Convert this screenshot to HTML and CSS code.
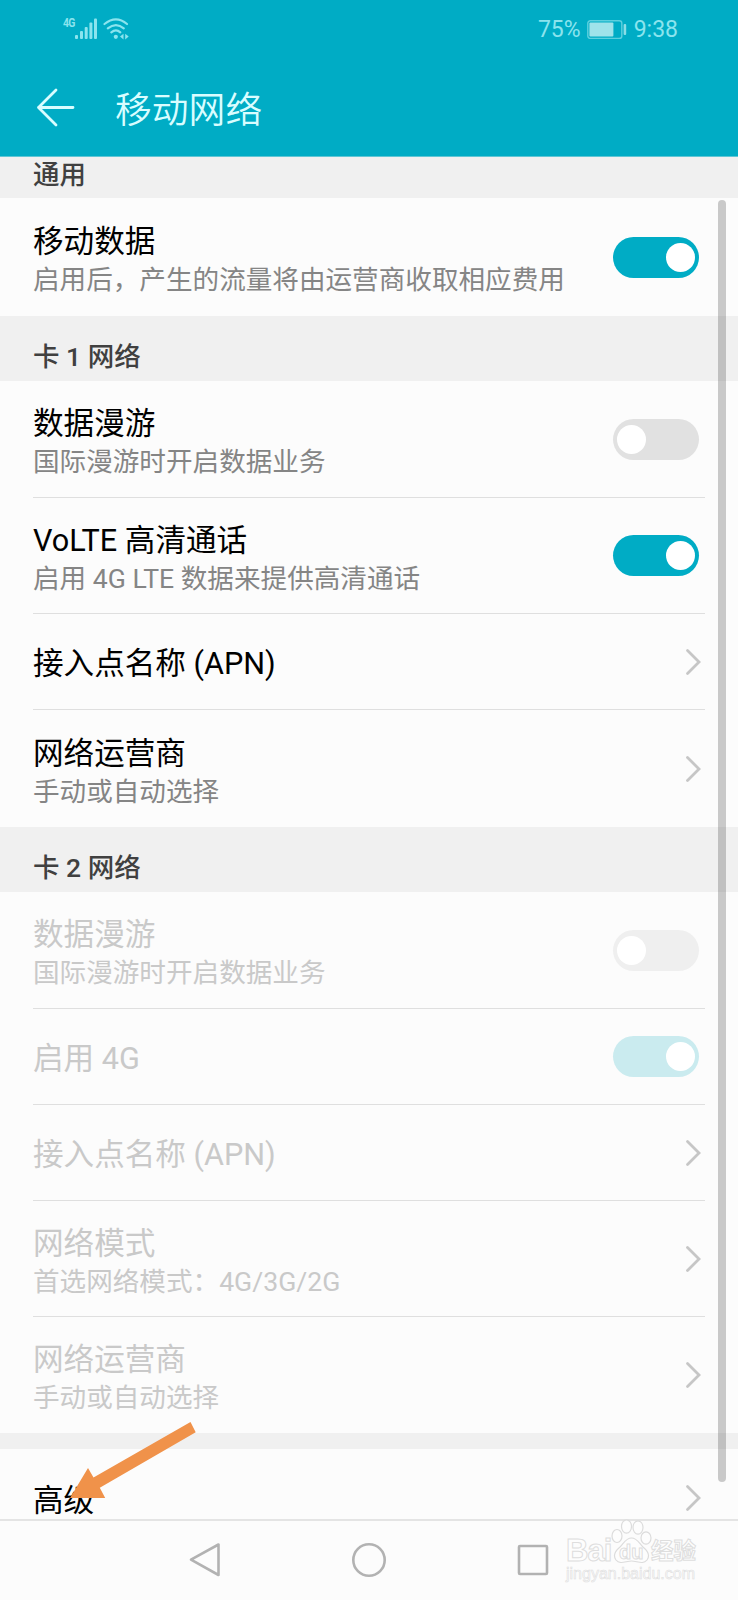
FILE: index.html
```
<!DOCTYPE html>
<html lang="zh-CN">
<head>
  <meta charset="UTF-8">
  <title>移动网络</title>
  <meta name="viewport" content="width=device-width, initial-scale=1.0">
  <link rel="stylesheet" href="styles.css">
</head>
<body>
  <svg class="defs" width="0" height="0">
    <symbol id="chevron" viewBox="0 0 16 28">
      <path d="M2.5 2.5 L14 14 L2.5 25.5" fill="none" stroke="#c6c6c6" stroke-width="2.8" stroke-linecap="round" stroke-linejoin="miter"/>
    </symbol>
  </svg>

  <header class="header">
    <div class="status-bar">
      <div class="status-left">
        <span class="net-type">4G</span>
        <svg class="signal" width="23" height="22" viewBox="0 0 23 22" fill="currentColor">
          <rect x="0" y="17" width="3" height="4" rx="1"/>
          <rect x="5" y="13" width="3" height="8" rx="1"/>
          <rect x="9.7" y="9" width="3" height="12" rx="1"/>
          <rect x="14.4" y="4.5" width="3" height="16.5" rx="1"/>
          <rect x="19" y="0.5" width="3" height="20.5" rx="1"/>
        </svg>
        <svg class="wifi" width="26" height="22" viewBox="0 0 26 22" fill="none" stroke="currentColor" stroke-width="2.2" stroke-linecap="round">
          <path d="M1.5 6 Q13 -3.2 24 6"/>
          <path d="M4.8 10.4 Q13 3.8 20.8 10.4"/>
          <path d="M8.3 14.3 Q13 10.6 17.3 14.3"/>
          <circle cx="12.8" cy="18.8" r="2.1" fill="currentColor" stroke="none"/>
          <path d="M20.5 15.7 V21.5 L17 18.6 Z M22.2 15.7 V21.5 L25.7 18.6 Z" fill="currentColor" stroke="none"/>
        </svg>
      </div>
      <div class="status-right">
        <span>75%</span>
        <svg class="battery" width="40" height="20" viewBox="0 0 40 20">
          <rect x="0.8" y="0.8" width="34" height="17.6" rx="2.5" fill="none" stroke="#5dd0de" stroke-width="1.4"/>
          <rect x="2.4" y="2.5" width="24" height="14" rx="1" fill="#9fe3ea"/>
          <rect x="36.6" y="4" width="2.6" height="11" rx="1" fill="#8bdde6"/>
        </svg>
        <span>9:38</span>
      </div>
    </div>
    <div class="title-bar">
      <svg width="40" height="40" viewBox="0 0 40 40" fill="none" stroke="#d9fdff" stroke-width="2.8" stroke-linecap="round" stroke-linejoin="round">
        <path d="M37 19.5 H2.5 M20 2 L2.5 19.5 L20 37"/>
      </svg>
      <h1>移动网络</h1>
    </div>
  </header>

  <main class="list">
    <h2 class="section first">通用</h2>
    <div class="row tall">
      <div class="text">
        <div class="name">移动数据</div>
        <div class="desc">启用后，产生的流量将由运营商收取相应费用</div>
      </div>
      <div class="toggle on"></div>
    </div>

    <h2 class="section">卡 1 网络</h2>
    <div class="row line">
      <div class="text">
        <div class="name">数据漫游</div>
        <div class="desc">国际漫游时开启数据业务</div>
      </div>
      <div class="toggle"></div>
    </div>
    <div class="row line short">
      <div class="text">
        <div class="name">VoLTE 高清通话</div>
        <div class="desc">启用 4G LTE 数据来提供高清通话</div>
      </div>
      <div class="toggle on"></div>
    </div>
    <div class="row line single">
      <div class="text">
        <div class="name">接入点名称 (APN)</div>
      </div>
      <svg class="chevron"><use href="#chevron"/></svg>
    </div>
    <div class="row">
      <div class="text">
        <div class="name">网络运营商</div>
        <div class="desc">手动或自动选择</div>
      </div>
      <svg class="chevron"><use href="#chevron"/></svg>
    </div>

    <h2 class="section">卡 2 网络</h2>
    <div class="row line disabled">
      <div class="text">
        <div class="name">数据漫游</div>
        <div class="desc">国际漫游时开启数据业务</div>
      </div>
      <div class="toggle"></div>
    </div>
    <div class="row line single disabled">
      <div class="text">
        <div class="name">启用 4G</div>
      </div>
      <div class="toggle on"></div>
    </div>
    <div class="row line single disabled">
      <div class="text">
        <div class="name">接入点名称 (APN)</div>
      </div>
      <svg class="chevron"><use href="#chevron"/></svg>
    </div>
    <div class="row line short disabled">
      <div class="text">
        <div class="name">网络模式</div>
        <div class="desc">首选网络模式：4G/3G/2G</div>
      </div>
      <svg class="chevron"><use href="#chevron"/></svg>
    </div>
    <div class="row short disabled">
      <div class="text">
        <div class="name">网络运营商</div>
        <div class="desc">手动或自动选择</div>
      </div>
      <svg class="chevron"><use href="#chevron"/></svg>
    </div>

    <div class="gap"></div>
    <div class="row single last">
      <div class="text">
        <div class="name">高级</div>
      </div>
      <svg class="chevron"><use href="#chevron"/></svg>
    </div>
  </main>

  <nav class="nav-bar">
    <svg width="36" height="36" viewBox="0 0 36 36"><path d="M31.5 2.5 V33 L4 17.7 Z"/></svg>
    <svg width="36" height="36" viewBox="0 0 36 36"><circle cx="18" cy="18" r="15.7"/></svg>
    <svg width="36" height="36" viewBox="0 0 36 36"><rect x="4" y="4" width="28" height="28" rx="1"/></svg>
  </nav>

  <div class="scrollbar"></div>

  <svg class="arrow" width="130" height="80" viewBox="0 0 130 80">
    <path d="M120.5 2 L125.7 12.3 L29.8 67.8 L35.2 78 L0 78 L18 48 L23.5 57.5 Z" fill="#f0924a"/>
  </svg>

  <div class="watermark">
    <div class="brand">
      <span class="bai">Bai</span>
      <span class="paw">
        <svg width="42" height="46" viewBox="0 0 42 46" fill="#fdfdfd" stroke="#dcdcdc" stroke-width="1.2">
          <ellipse cx="6" cy="17" rx="5" ry="6.5"/>
          <ellipse cx="15.5" cy="7.5" rx="5" ry="6.7"/>
          <ellipse cx="27" cy="8.5" rx="5" ry="6.7"/>
          <ellipse cx="35" cy="19" rx="5" ry="6.2"/>
          <path d="M20.5 19 C26 19 28 24 32 28 C38 33 39 37 36 41 C32 46 26 42 20.5 42 C15 42 9 46 5 41 C2 37 3 33 9 28 C13 24 15 19 20.5 19 Z"/>
        </svg>
        <b>du</b>
      </span>
      <span class="jy">经验</span>
    </div>
    <div class="site">jingyan.baidu.com</div>
  </div>
</body>
</html>
```
FILE: styles.css
```
body {
  margin: 0;
  height: 1600px;
  position: relative;
  display: flex;
  flex-direction: column;
  overflow: hidden;
  background-color: #fcfcfc;
  color: #000;
  font-family: Roboto, "Noto Sans CJK SC", sans-serif;
}

.defs {
  position: absolute;
}

svg {
  display: block;
  flex-shrink: 0;
}

.header {
  height: 157px;
  flex-shrink: 0;
  background-color: #00acc5;
  border-bottom: 1px solid #5fc6d5;
  box-sizing: border-box;
}

.status-bar {
  height: 58px;
  padding: 0 60px 0 63px;
  display: flex;
  align-items: center;
  justify-content: space-between;
  color: #8be4ee;
}

.status-left, .status-right {
  display: flex;
  align-items: center;
}

.net-type {
  width: 12px;
  font-size: 13px;
  line-height: 14px;
  font-weight: bold;
  letter-spacing: -1px;
  transform: scaleX(0.8);
  transform-origin: left;
  margin-bottom: 12px;
  white-space: nowrap;
}

.wifi {
  margin-left: 5px;
}

.status-right {
  font-size: 23px;
  padding-top: 1px;
}

.battery {
  margin: 0 7px 0 6px;
}

.title-bar {
  display: flex;
  align-items: center;
  height: 100px;
  padding-left: 36px;
}

h1 {
  margin: 5px 0 0 39px;
  font-size: 36.8px;
  line-height: 50px;
  font-weight: 350;
  color: #d9fdff;
}

.list {
  flex: 1;
  min-height: 0;
  overflow: hidden;
}

.section {
  margin: 0;
  height: 65px;
  padding: 16px 33px 0;
  box-sizing: border-box;
  background-color: #f0f0f0;
  color: #404040;
  font-size: 26.5px;
  line-height: 50px;
  font-weight: 500;
}

.section.first {
  height: 41px;
  padding-top: 0;
  line-height: 35px;
}

.row {
  height: 117px;
  margin: 0 33px;
  padding-right: 6px;
  box-sizing: border-box;
  display: flex;
  align-items: center;
  justify-content: space-between;
}

.row.tall {
  height: 118px;
}

.row.short {
  height: 116px;
}

.row.single {
  height: 96px;
}

.row.last {
  height: 98px;
}

.row.line {
  border-bottom: 1px solid #dfdfdf;
}

.text {
  padding-top: 5px;
  white-space: nowrap;
}

.single .text {
  padding-top: 4px;
}

.name {
  font-size: 30.6px;
  line-height: 41px;
}

.desc {
  font-size: 26.6px;
  line-height: 36px;
  color: #858585;
}

.disabled .name, .disabled .desc {
  color: #c9c9c9;
}

.toggle {
  width: 86px;
  height: 41px;
  padding: 6px 4px;
  box-sizing: border-box;
  display: flex;
  border-radius: 21px;
  background-color: #e1e1e1;
}

.toggle::after {
  content: "";
  width: 29px;
  height: 29px;
  border-radius: 50%;
  background-color: #fff;
}

.toggle.on {
  justify-content: flex-end;
  background-color: #00acc5;
}

.disabled .toggle {
  background-color: #efefef;
}

.disabled .toggle.on {
  background-color: #caebef;
}

.chevron {
  width: 16px;
  height: 28px;
  margin-right: -2px;
}

.gap {
  height: 16px;
  background-color: #f0f0f0;
}

.nav-bar {
  height: 81px;
  flex-shrink: 0;
  box-sizing: border-box;
  border-top: 2px solid #e4e4e4;
  padding-bottom: 2px;
  display: flex;
  justify-content: center;
  align-items: center;
  gap: 128px;
  fill: none;
  stroke: #b2b2b2;
  stroke-width: 2.6;
  stroke-linejoin: round;
}

.scrollbar {
  position: absolute;
  top: 200px;
  right: 12px;
  width: 8px;
  height: 1282px;
  border-radius: 4px;
  background-color: rgba(0, 0, 0, 0.2);
}

.arrow {
  position: absolute;
  left: 70px;
  top: 1420px;
}

.watermark {
  position: absolute;
  left: 566px;
  top: 1519px;
  color: #fdfdfd;
  -webkit-text-stroke: 1px #dedede;
  font-family: "Liberation Sans", "Noto Sans CJK SC", sans-serif;
}

.brand {
  display: flex;
  align-items: flex-end;
  height: 46px;
}

.bai {
  width: 45px;
  font-size: 31px;
  line-height: 28px;
  font-weight: bold;
  letter-spacing: -1px;
}

.paw {
  position: relative;
  width: 40px;
}

.paw b {
  position: absolute;
  left: 8px;
  bottom: 1px;
  font-size: 20px;
  line-height: 24px;
}

.jy {
  font-size: 22.5px;
  line-height: 27px;
  font-weight: bold;
}

.site {
  font-size: 16px;
  line-height: 18px;
  -webkit-text-stroke: 0.6px #dedede;
}
```
